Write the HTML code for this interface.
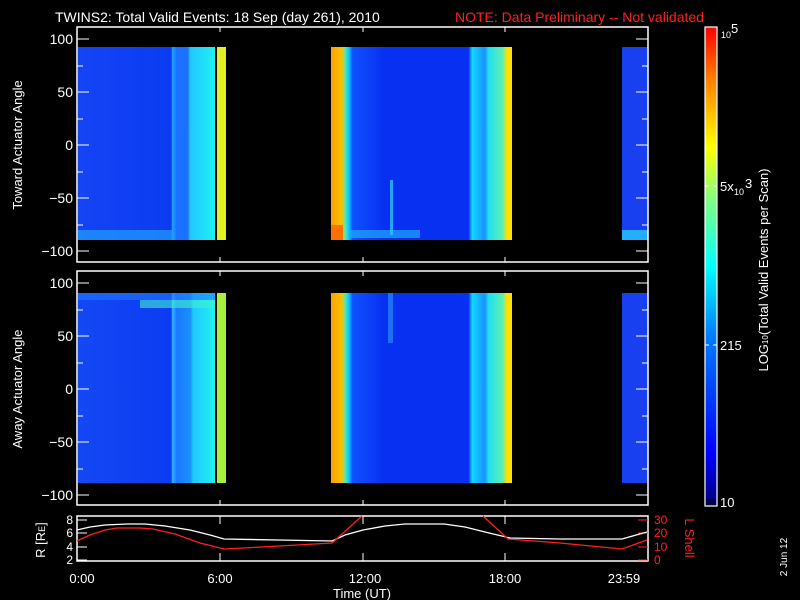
<!DOCTYPE html>
<html><head><meta charset="utf-8"><style>
html,body{margin:0;padding:0;background:#000;width:800px;height:600px;overflow:hidden}
svg{display:block}
text{font-family:"Liberation Sans",sans-serif;fill:#fff}
</style></head><body>
<svg width="800" height="600" viewBox="0 0 800 600" xmlns="http://www.w3.org/2000/svg">
<defs>
<linearGradient id="cb" x1="0" y1="1" x2="0" y2="0">
<stop offset="0" stop-color="#00007a"/><stop offset="0.11" stop-color="#0000ff"/><stop offset="0.36" stop-color="#0080ff"/><stop offset="0.5" stop-color="#00ffff"/><stop offset="0.64" stop-color="#80ff80"/><stop offset="0.75" stop-color="#ffff00"/><stop offset="0.89" stop-color="#ff8000"/><stop offset="1" stop-color="#ff0000"/>
</linearGradient>
<linearGradient id="g1" x1="78" y1="0" x2="215" y2="0" gradientUnits="userSpaceOnUse">
<stop offset="0" stop-color="#1444f4"/><stop offset="0.68" stop-color="#0c3cf2"/><stop offset="0.69" stop-color="#20a8ff"/><stop offset="0.72" stop-color="#1a70ff"/><stop offset="0.80" stop-color="#1a70ff"/><stop offset="0.82" stop-color="#20c8ff"/><stop offset="1" stop-color="#20f0f0"/>
</linearGradient>
<linearGradient id="g2" x1="331" y1="0" x2="512" y2="0" gradientUnits="userSpaceOnUse">
<stop offset="0" stop-color="#ffa000"/><stop offset="0.06" stop-color="#ffc000"/><stop offset="0.08" stop-color="#40f0c0"/><stop offset="0.1" stop-color="#10c0ff"/><stop offset="0.12" stop-color="#1050ff"/><stop offset="0.3" stop-color="#0830f0"/><stop offset="0.76" stop-color="#0830f0"/><stop offset="0.78" stop-color="#10d8ff"/><stop offset="0.85" stop-color="#1a90ff"/><stop offset="0.87" stop-color="#20e0f0"/><stop offset="0.95" stop-color="#60f0b0"/><stop offset="0.97" stop-color="#ffe000"/><stop offset="1" stop-color="#ffe000"/>
</linearGradient>
<linearGradient id="g3" x1="78" y1="0" x2="215" y2="0" gradientUnits="userSpaceOnUse">
<stop offset="0" stop-color="#1448f4"/><stop offset="0.68" stop-color="#0c3cf2"/><stop offset="0.69" stop-color="#30b8ff"/><stop offset="0.72" stop-color="#1a78ff"/><stop offset="0.82" stop-color="#1a90ff"/><stop offset="0.84" stop-color="#20c8ff"/><stop offset="1" stop-color="#20f0f0"/>
</linearGradient>
</defs>

<text x="55" y="22" font-size="14">TWINS2: Total Valid Events: 18 Sep (day 261), 2010</text>
<text x="455" y="22" font-size="14" style="fill:#ff2020">NOTE: Data Preliminary -- Not validated</text>

<rect x="78" y="47" width="137" height="193" fill="url(#g1)"/>
<rect x="78" y="230" width="96" height="10" fill="#20a0ff" opacity="0.7"/>
<rect x="217" y="47" width="9" height="193" fill="#e0f020"/>
<rect x="331" y="47" width="181" height="193" fill="url(#g2)"/>
<rect x="331" y="225" width="12" height="15" fill="#ff7000"/>
<rect x="350" y="230" width="70" height="8" fill="#20a8ff" opacity="0.7"/>
<rect x="390" y="180" width="3" height="55" fill="#30c0ff" opacity="0.8"/>
<rect x="622" y="47" width="26" height="193" fill="#1840f0"/>
<rect x="622" y="230" width="26" height="10" fill="#20b0ff"/>

<rect x="78" y="293" width="137" height="190" fill="url(#g3)"/>
<rect x="78" y="293" width="137" height="7" fill="#2078ff" opacity="0.6"/>
<rect x="140" y="300" width="75" height="8" fill="#40f0d0" opacity="0.6"/>
<rect x="217" y="293" width="9" height="190" fill="#a8f040"/>
<rect x="331" y="293" width="181" height="190" fill="url(#g2)"/>
<rect x="388" y="293" width="5" height="50" fill="#30b0ff" opacity="0.5"/>
<rect x="622" y="293" width="26" height="190" fill="#1840f0"/>

<g fill="none" stroke="#fff" stroke-width="1.5">
<rect x="77" y="27" width="571" height="235"/>
<rect x="77" y="271" width="571" height="234"/>
<rect x="77" y="516" width="571" height="45"/>
</g>
<g stroke="#fff" stroke-width="1">
<path d="M77 39h12M77 92h12M77 145h12M77 198h12M77 251h12M77 66h6M77 119h6M77 172h6M77 225h6M648 39h-12M648 92h-12M648 145h-12M648 198h-12M648 251h-12M648 66h-6M648 119h-6M648 172h-6M648 225h-6"/>
<path d="M77 283h12M77 336h12M77 389h12M77 442h12M77 495h12M77 310h6M77 363h6M77 416h6M77 469h6M648 283h-12M648 336h-12M648 389h-12M648 442h-12M648 495h-12M648 310h-6M648 363h-6M648 416h-6M648 469h-6"/>
<path d="M220 27v5M363 27v5M505 27v5M220 262v-5M363 262v-5M505 262v-5M220 271v5M363 271v5M505 271v5M220 505v-5M363 505v-5M505 505v-5"/>
<path d="M220 516v8M363 516v8M505 516v8M220 561v-8M363 561v-8M505 561v-8M77 520h10M77 533h10M77 547h10M77 560h10"/>
</g>
<g font-size="14" text-anchor="end">
<text x="73" y="44">100</text><text x="73" y="97">50</text><text x="73" y="150">0</text><text x="73" y="203">−50</text><text x="73" y="256">−100</text>
<text x="73" y="288">100</text><text x="73" y="341">50</text><text x="73" y="394">0</text><text x="73" y="447">−50</text><text x="73" y="500">−100</text>
</g>
<g font-size="12" text-anchor="end">
<text x="73" y="524">8</text><text x="73" y="537">6</text><text x="73" y="551">4</text><text x="73" y="564">2</text>
</g>
<g font-size="12">
<text x="654" y="524" style="fill:#ff2020">30</text><text x="654" y="537" style="fill:#ff2020">20</text><text x="654" y="551" style="fill:#ff2020">10</text><text x="654" y="564" style="fill:#ff2020">0</text>
</g>
<path d="M648 520h-10M648 533h-10M648 547h-10M648 560h-10" stroke="#ff2020"/>
<text x="22" y="145" font-size="13" text-anchor="middle" transform="rotate(-90 22 145)">Toward Actuator Angle</text>
<text x="22" y="389" font-size="13" text-anchor="middle" transform="rotate(-90 22 389)">Away Actuator Angle</text>
<text x="45" y="540" font-size="13" text-anchor="middle" transform="rotate(-90 45 540)">R [R<tspan font-size="9">E</tspan>]</text>
<text x="685" y="538" font-size="13" text-anchor="middle" transform="rotate(90 685 538)" style="fill:#ff2020">L Shell</text>

<polyline fill="none" stroke="#fff" stroke-width="1.3" points="77,530 90,527 105,525 127,524 145,524 165,526 190,530 210,535 224,539 278,540 332,541 345,535 363,530 385,526 405,524 423,524 444,524 465,527 485,532 510,538 560,539 622,539 647,532"/>
<polyline fill="none" stroke="#ff2020" stroke-width="1.3" points="77,541 90,535 105,530 117,528 140,528 153,529 175,534 200,543 224,549 280,546 332,543 362,516"/>
<polyline fill="none" stroke="#ff2020" stroke-width="1.3" points="483,516 508,539 560,543 622,549 647,540"/>

<g font-size="13" text-anchor="middle">
<text x="82" y="583">0:00</text><text x="220" y="583">6:00</text><text x="365" y="583">12:00</text><text x="505" y="583">18:00</text><text x="624" y="583">23:59</text>
<text x="362" y="598">Time (UT)</text>
</g>

<rect x="705" y="27" width="12" height="479" fill="url(#cb)" stroke="#fff" stroke-width="1.2"/>
<rect x="706" y="499" width="10" height="6" fill="#00004a"/>
<path d="M705 186h4M713 186h4M705 345h4M713 345h4" stroke="#fff"/>
<text x="721" y="38" font-size="9">10</text><text x="731" y="33" font-size="13">5</text>
<text x="720" y="191" font-size="13">5x</text><text x="734" y="195" font-size="9">10</text><text x="745" y="188" font-size="13">3</text>
<text x="720" y="350" font-size="13">215</text>
<text x="720" y="507" font-size="13">10</text>
<text x="768" y="270" font-size="13" text-anchor="middle" transform="rotate(-90 768 270)">LOG<tspan font-size="8">10</tspan>(Total Valid Events per Scan)</text>
<text x="787" y="557" font-size="10" text-anchor="middle" transform="rotate(-90 787 557)">2 Jun 12</text>
</svg>
</body></html>
